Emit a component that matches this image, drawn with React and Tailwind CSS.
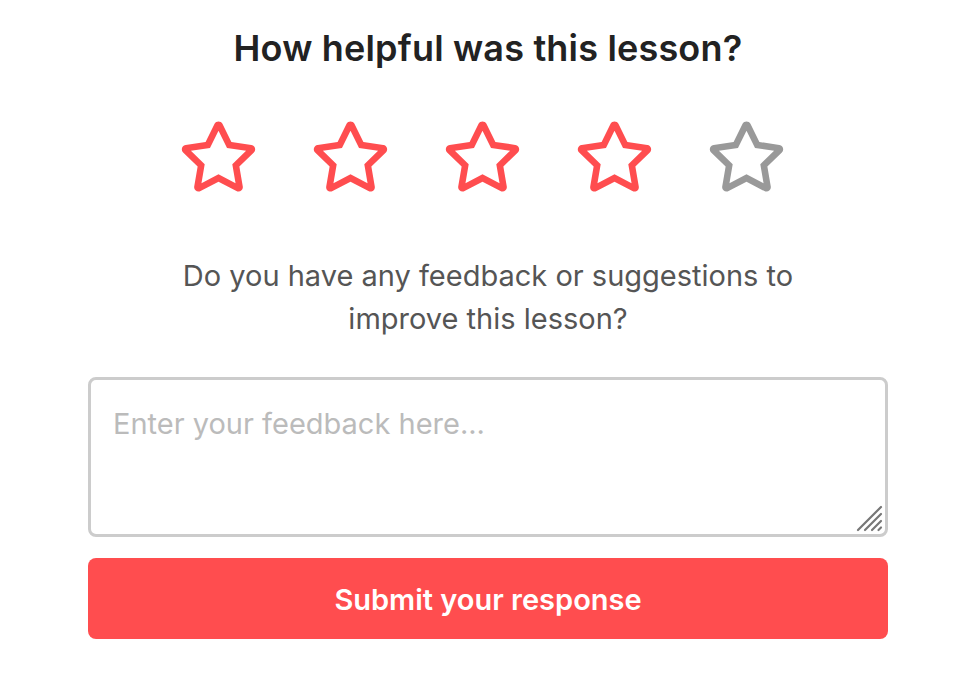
import React, { useState } from 'react';
import { FaRegStar } from 'react-icons/fa';

const font = { fontFamily: 'Inter, "Noto Sans", sans-serif' };

// hatch drawn over the textarea corner (native one differs per browser)
const ResizeHatch = () => (
  <svg width="28" height="28" viewBox="0 0 28 28" className="absolute right-[5px] bottom-[5px] pointer-events-none">
    <g stroke="#777" strokeWidth="2.2" strokeLinecap="round">
      <line x1="3" y1="26" x2="26" y2="3" />
      <line x1="10" y1="26" x2="26" y2="10" />
      <line x1="17" y1="26" x2="26" y2="17" />
      <line x1="23.5" y1="26" x2="26" y2="23.5" />
    </g>
  </svg>
);

export default function App() {
  const [rating, setRating] = useState(4);
  const [text, setText] = useState('');

  return (
    <div className="w-[972px] h-[684px] bg-white pl-[88px] pr-[84px] pt-[24px]" style={font}>
      <div className="flex flex-col items-center">
        <h1 className="text-[36px] leading-[48px] font-semibold text-[#222] tracking-[0.005em]">How helpful was this lesson?</h1>

        <div className="flex gap-[41px] mt-[45px]">
          {[1, 2, 3, 4, 5].map((n) => (
            <button
              key={n}
              onClick={() => setRating(n)}
              className={'w-[91px] pr-[12px] flex justify-center ' + (n <= rating ? 'text-[#ff4d4f]' : 'text-[#999]')}
            >
              <FaRegStar size={79} />
            </button>
          ))}
        </div>

        <p className="mt-[58px] text-[29px] leading-[43px] text-[#555] text-center w-[660px]">
          Do you have any feedback or suggestions to improve this lesson?
        </p>

        <div className="relative w-full mt-[37px]">
          <textarea
            value={text}
            onChange={(e) => setText(e.target.value)}
            placeholder="Enter your feedback here..."
            className="block w-full h-[160px] border-[3px] border-[#ccc] rounded-[8px] px-[22px] pt-[26px] pb-[20px] text-[29px] leading-[36px] text-[#333] placeholder:text-[#bbb] resize-none outline-none"
          />
          <ResizeHatch />
        </div>

        <button className="mt-[21px] w-full h-[81px] rounded-[8px] bg-[#ff4d4f] text-white text-[29px] font-semibold pt-[3px]">
          Submit your response
        </button>
      </div>
    </div>
  );
}
